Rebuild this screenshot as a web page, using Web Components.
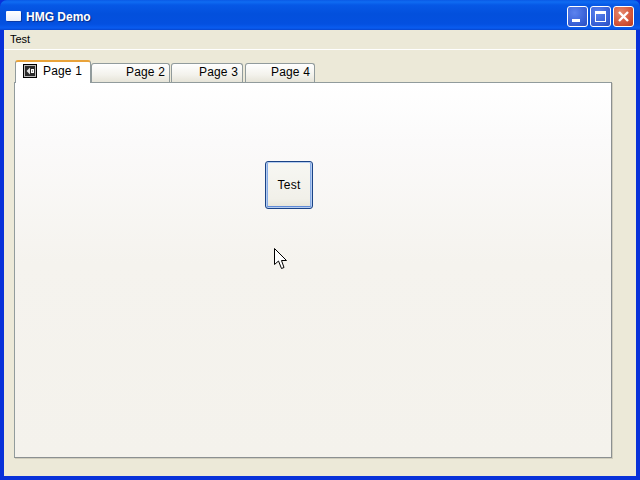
<!DOCTYPE html>
<html>
<head>
<meta charset="utf-8">
<title>HMG Demo</title>
<style>
    html, body {
        margin: 0;
        padding: 0;
        width: 640px;
        height: 480px;
        overflow: hidden;
        background: #ece9d8;
    }
</style>
</head>
<body>
<xp-window caption="HMG Demo">
    <xp-menubar>Test</xp-menubar>
    <xp-tabs>
        <xp-tab slot="tabs" active icon>Page 1</xp-tab>
        <xp-tab slot="tabs" style="width:79px">Page 2</xp-tab>
        <xp-tab slot="tabs" style="width:72px;margin-left:1px">Page 3</xp-tab>
        <xp-tab slot="tabs" style="width:70px;margin-left:2px">Page 4</xp-tab>
        <xp-button>Test</xp-button>
    </xp-tabs>
    <xp-cursor></xp-cursor>
</xp-window>

<script>
// Window frame with the title bar and caption buttons.
class XpWindow extends HTMLElement {
    constructor() {
        super()
        this.shadow = this.attachShadow({ mode: 'open' })
        this.shadow.innerHTML = `
<style>
    :host {
        display: flex;
        flex-direction: column;
        position: relative;
        width: 640px;
        height: 480px;
        box-sizing: border-box;
        background: #0831d9;
        font-family: "Liberation Sans", Arial, sans-serif;
    }
    #title {
        display: flex;
        align-items: center;
        height: 30px;
        flex: none;
        box-sizing: border-box;
        padding: 2px 6px 0 6px;
        border-radius: 7px 7px 0 0;
        background: linear-gradient(to bottom, #0a5ae6 0, #0f6cf2 2px, #0658e6 5px, #0350dc 14px, #0450e0 24px, #0a5cf0 28px, #0645cf 30px);
    }
    #appicon {
        width: 15px;
        height: 10px;
        margin-right: 5px;
        flex: none;
        box-sizing: border-box;
        border-radius: 1px;
        box-shadow: 1px 1px 0 #0a3aa8;
        background: linear-gradient(to bottom, #ffffff, #e8eefc);
    }
    #caption {
        flex: 1;
        margin-top: 2px;
        color: #fff;
        font-size: 12px;
        font-weight: bold;
        text-shadow: 1px 1px 1px #0a2a80;
    }
    #buttons {
        display: flex;
        gap: 2px;
    }
    .btn {
        width: 21px;
        height: 21px;
        box-sizing: border-box;
        border: 1px solid #fff;
        border-radius: 3px;
        background: radial-gradient(circle at 35% 30%, #5c83ee, #3a62d8 60%, #2a4cc0);
        display: block;
    }
    .close {
        background: radial-gradient(circle at 35% 30%, #e68a6e, #d4553a 60%, #b83a1f);
    }
    #body {
        flex: 1;
        display: flex;
        flex-direction: column;
        margin: 0 4px 4px 4px;
        background: #ece9d8;
        min-height: 0;
    }
    ::slotted(xp-cursor) {
        position: absolute;
        left: 274px;
        top: 248px;
    }
</style>
<div id="title">
    <div id="appicon"></div>
    <div id="caption"></div>
    <div id="buttons">
        <svg class="btn" viewBox="0 0 19 19"><rect x="4" y="12" width="8" height="3" fill="#fff"/></svg>
        <svg class="btn" viewBox="0 0 19 19"><path d="M4 4h11v11H4z M5 7v7h9V7z" fill="#fff" fill-rule="evenodd"/></svg>
        <svg class="btn close" viewBox="0 0 19 19"><path d="M5 5l9 9M14 5l-9 9" stroke="#fff" stroke-width="2.4" fill="none"/></svg>
    </div>
</div>
<div id="body"><slot></slot></div>`
        this.shadow.querySelector('#caption').textContent = this.getAttribute('caption')
    }
}

// Menu bar, with the white rule under it.
class XpMenubar extends HTMLElement {
    constructor() {
        super()
        this.attachShadow({ mode: 'open' }).innerHTML = `
<style>
    :host {
        display: block;
        height: 20px;
        box-sizing: border-box;
        padding: 2px 0 0 6px;
        font-size: 11px;
        line-height: 15px;
        color: #000;
        background: #ece9d8;
        border-bottom: 1px solid #fff;
    }
</style>
<slot></slot>`
    }
}

// Tab strip and the panel under it.
class XpTabs extends HTMLElement {
    constructor() {
        super()
        this.attachShadow({ mode: 'open' }).innerHTML = `
<style>
    :host {
        display: flex;
        flex-direction: column;
        width: 598px;
        height: 408px;
        margin: 9px 0 0 10px;
    }
    #strip {
        display: flex;
        align-items: flex-end;
        height: 23px;
        flex: none;
        padding-left: 1px;
        position: relative;
        z-index: 1;
    }
    #panel {
        flex: none;
        height: 376px;
        box-sizing: border-box;
        padding: 78px 0 0 250px;
        border: 1px solid #919b9c;
        border-right-color: #8b9091;
        border-bottom-color: #8b9091;
        box-shadow: 1px 1px 0 #d0cdbd;
        background: linear-gradient(to bottom, #ffffff 0, #fbfafa 60px, #f5f3ee 180px, #f4f2ec 100%);
    }
</style>
<div id="strip"><slot name="tabs"></slot></div>
<div id="panel"><slot></slot></div>`
    }
}

class XpTab extends HTMLElement {
    constructor() {
        super()
        this.attachShadow({ mode: 'open' }).innerHTML = `
<style>
    :host {
        display: flex;
        align-items: center;
        justify-content: flex-end;
        box-sizing: border-box;
        height: 19px;
        padding: 0 4px 2px 0;
        font-size: 12px;
        letter-spacing: 0.15px;
        color: #000;
        border: 1px solid #919b9c;
        border-bottom: none;
        border-radius: 3px 3px 0 0;
        background: linear-gradient(to bottom, #ffffff, #f3f2ec 60%, #e6e4d8);
    }
    :host([active]) {
        width: 76px;
        height: 23px;
        padding: 0 8px 3px 7px;
        justify-content: space-between;
        background: #fff;
        border-top: 2px solid #e9a33a;
        margin-bottom: -1px;
    }
    svg { display: none; flex: none; align-self: flex-start; margin-top: 2px; }
    :host([icon]) svg { display: block; }
</style>
<svg width="14" height="14" viewBox="0 0 14 14">
    <rect x="0.5" y="0.5" width="13" height="13" fill="#bbb" stroke="#000"/>
    <rect x="2" y="2" width="10" height="10" fill="#2a2a2a"/>
    <path d="M3.5 7L7 3.5v7z" fill="#e4e4e4"/>
    <path d="M8 5h3v4H8z" fill="#fff"/>
    <path d="M9 6.500h1v1H9z" fill="#333"/>
</svg>
<span><slot></slot></span>`
    }
}

class XpButton extends HTMLElement {
    constructor() {
        super()
        this.attachShadow({ mode: 'open' }).innerHTML = `
<style>
    :host {
        display: flex;
        align-items: center;
        justify-content: center;
        box-sizing: border-box;
        width: 48px;
        height: 48px;
        font-size: 12px;
        letter-spacing: 0.3px;
        color: #000;
        border: 1px solid #1a4386;
        border-radius: 3px;
        background: linear-gradient(to bottom, #f7f7f3, #f1f0e9 80%, #e4e2d6);
        box-shadow: inset 0 0 0 1px #b5cdf0, inset 0 -2px 0 #5f8ad6, inset 2px 0 0 #87abe6, inset -2px 0 0 #87abe6;
    }
</style>
<slot></slot>`
    }
}

// Mouse pointer over the page.
class XpCursor extends HTMLElement {
    constructor() {
        super()
        this.attachShadow({ mode: 'open' }).innerHTML = `
<style>
    :host { display: block; width: 14px; height: 22px; }
    svg { display: block; }
</style>
<svg width="14" height="22" viewBox="0 0 14 22">
    <path d="M0.5 0.5V16.5L4.5 13L7.5 20.5L10 19.5L7.5 12.5H12.5Z" fill="#fff" stroke="#000" stroke-width="1" stroke-linejoin="miter"/>
</svg>`
    }
}

window.customElements.define('xp-window', XpWindow)
window.customElements.define('xp-menubar', XpMenubar)
window.customElements.define('xp-tabs', XpTabs)
window.customElements.define('xp-tab', XpTab)
window.customElements.define('xp-button', XpButton)
window.customElements.define('xp-cursor', XpCursor)
</script>
</body>
</html>
